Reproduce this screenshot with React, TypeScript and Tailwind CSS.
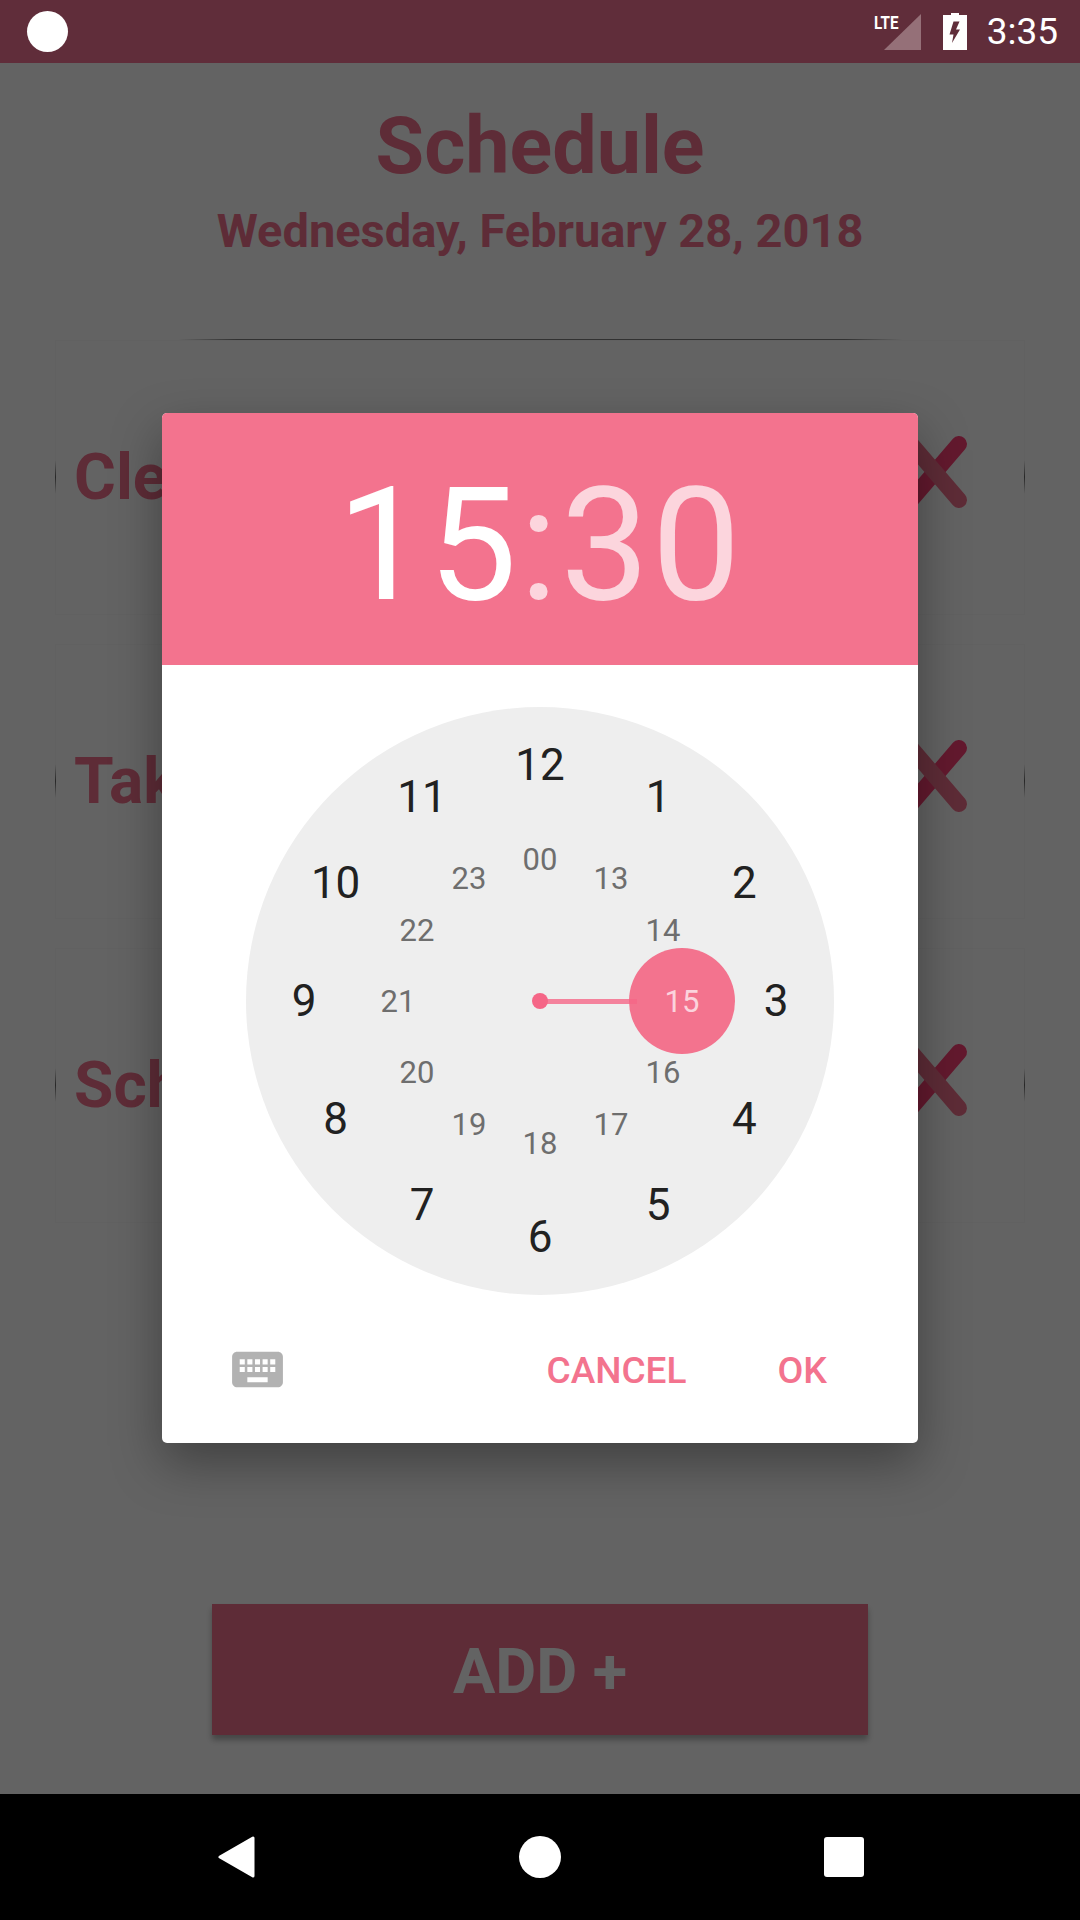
/**
 * Schedule screen with the time picker dialog open on top of it.
 */
const TASKS = ['Clean', 'Take', 'School']

const OUTER_HOURS = ['12', '1', '2', '3', '4', '5', '6', '7', '8', '9', '10', '11']
const INNER_HOURS = ['00', '13', '14', '15', '16', '17', '18', '19', '20', '21', '22', '23']

const CLOCK_RADIUS = 294

function ringPosition(index: number, radius: number) {
  const angle = (index * 30 * Math.PI) / 180
  return {
    left: CLOCK_RADIUS + radius * Math.sin(angle),
    top: CLOCK_RADIUS - radius * Math.cos(angle),
  }
}

function StatusBar() {
  return (
    <div className="relative z-10 flex h-[63px] shrink-0 items-center bg-[#602d3a] pl-[27px] pr-[22px] text-white">
      <div className="h-[41px] w-[41px] rounded-full bg-white" />
      <div className="ml-auto flex items-center">
        <div className="relative h-[36px] w-[46px]">
          <svg width="46" height="36" viewBox="0 0 46 36" className="block">
            <polygon points="9,36 46,0 46,36" fill="#957078" />
          </svg>
          <span className="absolute left-[-1px] top-[-1px] w-[24px] origin-left scale-x-[0.8] text-[19px] font-bold leading-[19px] whitespace-nowrap">
            LTE
          </span>
        </div>
        <svg width="24" height="37" viewBox="0 0 24 37" className="ml-[22px] block">
          <path d="M8 0h8v2h8v35H0V2h8z" fill="#fff" />
          <polygon points="10.5,8.5 16.5,8.5 13,16.5 17,16.5 9,30 10.5,21.5 6.5,21.5" fill="#602d3a" />
        </svg>
        <span className="ml-[20px] text-[37px] leading-none">3:35</span>
      </div>
    </div>
  )
}

function NavBar() {
  return (
    <div className="relative z-10 flex h-[126px] shrink-0 items-center justify-center bg-black">
      <div className="flex w-[304px] justify-center">
        <svg width="38" height="42" viewBox="0 0 38 42" className="block">
          <polygon points="36,2 36,40 3,21" fill="#fff" stroke="#fff" strokeWidth="3" strokeLinejoin="round" />
        </svg>
      </div>
      <div className="flex w-[304px] justify-center">
        <div className="h-[42px] w-[42px] rounded-full bg-white" />
      </div>
      <div className="flex w-[304px] justify-center">
        <div className="h-[40px] w-[40px] rounded-[3px] bg-white" />
      </div>
    </div>
  )
}

function TaskCard({ label }: { label: string }) {
  return (
    <div className="relative flex h-[275px] items-center justify-between border border-black/[0.02] pl-[18px] pr-[49px]">
      <div className="absolute left-[-1px] top-[119px] h-[34px] w-px bg-gradient-to-b from-transparent via-black/60 to-transparent" />
      <div className="absolute right-[-1px] top-[119px] h-[34px] w-px bg-gradient-to-b from-transparent via-black/60 to-transparent" />
      <span className="text-[64px] font-bold leading-none text-[#f3738e] whitespace-nowrap">{label}</span>
      <svg width="80" height="80" viewBox="0 0 80 80" className="mb-[12px] block">
        <line x1="16" y1="68" x2="64" y2="12" stroke="#ff4178" strokeWidth="16" strokeLinecap="round" />
        <line x1="16" y1="12" x2="64" y2="68" stroke="#f3738e" strokeWidth="16" strokeLinecap="round" />
      </svg>
    </div>
  )
}

function ScheduleScreen() {
  return (
    <div className="flex min-h-0 flex-1 flex-col items-center bg-white pt-[38px]">
      <h1 className="text-[79px] font-bold leading-[90px] text-[#f3738e]">Schedule</h1>
      <h2 className="mt-[12px] text-[47px] font-bold leading-[56px] text-[#f3738e]">Wednesday, February 28, 2018</h2>
      <div className="mt-[80px] h-px w-[725px] bg-[linear-gradient(to_right,transparent,rgba(0,0,0,0.5)_8%,rgba(0,0,0,0.5)_92%,transparent)]" />
      <div className="flex w-[970px] flex-col gap-[29px]">
        {TASKS.map(task => (
          <TaskCard key={task} label={task} />
        ))}
      </div>
      <button className="mb-[59px] mt-auto flex h-[131px] w-[656px] items-center justify-center bg-[#f3738e] pt-[6px] text-[63px] font-bold text-white shadow-[0_5px_6px_rgba(0,0,0,0.3)]">
        ADD +
      </button>
    </div>
  )
}

function ClockFace() {
  return (
    <div className="relative h-[588px] w-[588px] rounded-full bg-[#eeeeee]">
      {/* selected hour bubble and hand */}
      <div
        className="absolute h-[106px] w-[106px] -translate-x-1/2 -translate-y-1/2 rounded-full bg-[#f3738e]"
        style={ringPosition(3, 142)}
      />
      <div className="absolute left-[294px] top-[291.5px] h-[5px] w-[97px] bg-[#f56687]/80" />
      <div className="absolute left-[286px] top-[286px] h-[16px] w-[16px] rounded-full bg-[#f56687]" />

      {OUTER_HOURS.map((hour, i) => (
        <span
          key={hour}
          className="absolute -translate-x-1/2 -translate-y-1/2 text-[44px] leading-none text-[#212121]"
          style={ringPosition(i, 236)}
        >
          {hour}
        </span>
      ))}
      {INNER_HOURS.map((hour, i) => (
        <span
          key={hour}
          className={`absolute -translate-x-1/2 -translate-y-1/2 text-[31px] leading-none ${
            hour === '15' ? 'text-[#fbd3dd]' : 'text-[#6e6e6e]'
          }`}
          style={ringPosition(i, 142)}
        >
          {hour}
        </span>
      ))}
    </div>
  )
}

function TimePickerDialog() {
  return (
    <div className="flex h-[1030px] w-[756px] flex-col overflow-hidden rounded-[5px] bg-white shadow-[0_20px_50px_rgba(0,0,0,0.35)]">
      <div className="flex h-[252px] shrink-0 items-center justify-center bg-[#f3738e] pt-[12px] text-[158px] leading-none tracking-[2.5px] text-white">
        <span>15</span>
        <span className="text-white/70">:30</span>
      </div>
      <div className="flex justify-center pt-[42px]">
        <ClockFace />
      </div>
      <div className="flex flex-1 items-center pl-[65px] pr-[91px]">
        <svg width="61" height="61" viewBox="0 0 24 24" className="block" fill="#b2b2b2">
          <path d="M20 5H4c-1.1 0-1.99.9-1.99 2L2 17c0 1.1.9 2 2 2h16c1.1 0 2-.9 2-2V7c0-1.1-.9-2-2-2zm-9 3h2v2h-2V8zm0 3h2v2h-2v-2zM8 8h2v2H8V8zm0 3h2v2H8v-2zm-1 2H5v-2h2v2zm0-3H5V8h2v2zm9 7H8v-2h8v2zm0-4h-2v-2h2v2zm0-3h-2V8h2v2zm3 3h-2v-2h2v2zm0-3h-2V8h2v2z" />
        </svg>
        <span className="ml-auto pt-[3px] text-[37px] font-medium leading-none text-[#f3738e]">CANCEL</span>
        <span className="ml-[91px] pt-[3px] text-[37.5px] font-medium leading-none text-[#f3738e]">OK</span>
      </div>
    </div>
  )
}

export default function App() {
  return (
    <div className="relative flex h-[1920px] w-[1080px] flex-col overflow-hidden bg-white [font-family:Roboto,sans-serif]">
      <StatusBar />
      <ScheduleScreen />
      <NavBar />
      {/* dialog scrim */}
      <div className="absolute inset-x-0 bottom-[126px] top-[63px] flex items-center justify-center bg-black/[0.61] pb-[1px]">
        <TimePickerDialog />
      </div>
    </div>
  )
}
